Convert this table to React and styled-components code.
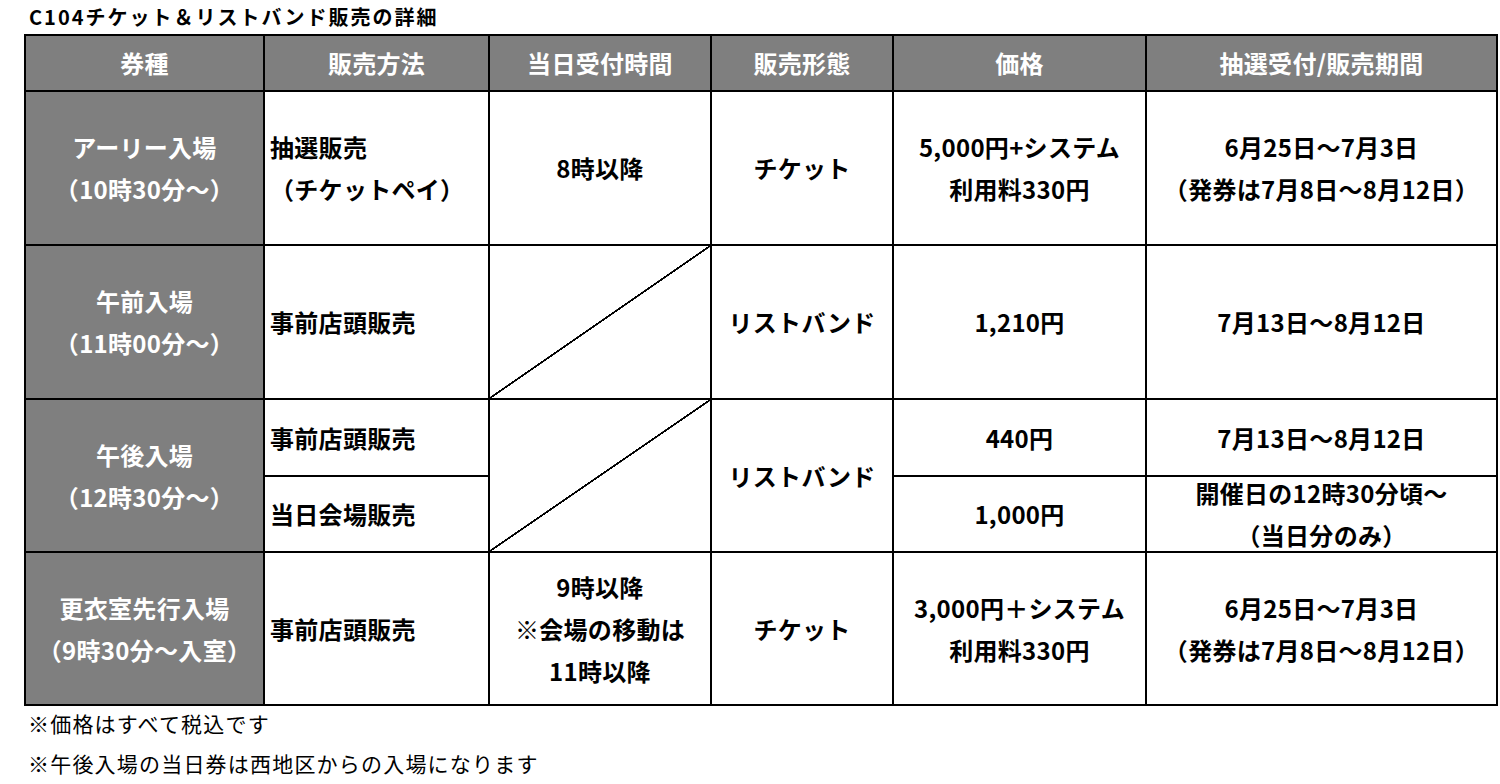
import React from 'react';
import styled, { createGlobalStyle } from 'styled-components';

const GlobalStyle = createGlobalStyle`
  body {
    margin: 0;
    background: #fff;
    color: #000;
    font-family: "Noto Sans CJK JP", "Noto Sans", sans-serif;
  }
`;

const Page = styled.div`
  width: 1500px;
  height: 784px;
  padding-left: 24px;
  box-sizing: border-box;
`;

const Title = styled.h1`
  margin: 0;
  height: 34px;
  line-height: 34px;
  padding-left: 5px;
  font-size: 20px;
  font-weight: 700;
  letter-spacing: 2px;
`;

const Grid = styled.div`
  display: grid;
  grid-template-columns: 237px 223px 220px 180px 251px 349px;
  grid-template-rows: 54px 152px 152px 75px 74px 151px;
  gap: 2px;
  padding: 2px;
  width: max-content;
  background: #000;
`;

const Cell = styled.div`
  grid-row: ${p => (p.$rows ? `span ${p.$rows}` : 'auto')};
  display: flex;
  flex-direction: column;
  justify-content: center;
  align-items: ${p => (p.$left ? 'flex-start' : 'center')};
  padding-left: ${p => (p.$left ? '5px' : '0')};
  text-align: ${p => (p.$left ? 'left' : 'center')};
  background: ${p => (p.$head ? '#7f7f7f' : '#fff')};
  color: ${p => (p.$head ? '#fff' : '#000')};
  font-size: 24px;
  font-weight: 700;
  line-height: 42px;
  letter-spacing: 0.3px;
  white-space: nowrap;
  overflow: visible;
`;

const Slash = styled(Cell)`
  background: linear-gradient(
    to bottom right,
    transparent calc(50% - 1px),
    #000 calc(50% - 0.8px),
    #000 calc(50% + 0.8px),
    transparent calc(50% + 1px)
  ), #fff;
`;

const Notes = styled.div`
  padding-left: 4px;
`;

const Note = styled.p`
  margin: 0;
  height: 34px;
  line-height: 34px;
  font-size: 21px;
  letter-spacing: 1.2px;
  & + & {
    margin-top: 6px;
  }
`;

const Lines = ({ children }) =>
  children.split('\n').map((line, i) => <span key={i}>{line}</span>);

const headers = ['券種', '販売方法', '当日受付時間', '販売形態', '価格', '抽選受付/販売期間'];

export default function App() {
  return (
    <>
      <GlobalStyle />
      <Page>
        <Title>C104チケット＆リストバンド販売の詳細</Title>
        <Grid>
          {headers.map(h => (
            <Cell key={h} $head>{h}</Cell>
          ))}

          <Cell $head><Lines>{'アーリー入場\n（10時30分～）'}</Lines></Cell>
          <Cell $left><Lines>{'抽選販売\n（チケットペイ）'}</Lines></Cell>
          <Cell>8時以降</Cell>
          <Cell>チケット</Cell>
          <Cell><Lines>{'5,000円+システム\n利用料330円'}</Lines></Cell>
          <Cell><Lines>{'6月25日～7月3日\n（発券は7月8日～8月12日）'}</Lines></Cell>

          <Cell $head><Lines>{'午前入場\n（11時00分～）'}</Lines></Cell>
          <Cell $left>事前店頭販売</Cell>
          <Slash />
          <Cell>リストバンド</Cell>
          <Cell>1,210円</Cell>
          <Cell>7月13日～8月12日</Cell>

          <Cell $head $rows={2}><Lines>{'午後入場\n（12時30分～）'}</Lines></Cell>
          <Cell $left>事前店頭販売</Cell>
          <Slash $rows={2} />
          <Cell $rows={2}>リストバンド</Cell>
          <Cell>440円</Cell>
          <Cell>7月13日～8月12日</Cell>
          <Cell $left>当日会場販売</Cell>
          <Cell>1,000円</Cell>
          <Cell><Lines>{'開催日の12時30分頃～\n（当日分のみ）'}</Lines></Cell>

          <Cell $head><Lines>{'更衣室先行入場\n（9時30分～入室）'}</Lines></Cell>
          <Cell $left>事前店頭販売</Cell>
          <Cell><Lines>{'9時以降\n※会場の移動は\n11時以降'}</Lines></Cell>
          <Cell>チケット</Cell>
          <Cell><Lines>{'3,000円＋システム\n利用料330円'}</Lines></Cell>
          <Cell><Lines>{'6月25日～7月3日\n（発券は7月8日～8月12日）'}</Lines></Cell>
        </Grid>
        <Notes>
          <Note>※価格はすべて税込です</Note>
          <Note>※午後入場の当日券は西地区からの入場になります</Note>
        </Notes>
      </Page>
    </>
  );
}
